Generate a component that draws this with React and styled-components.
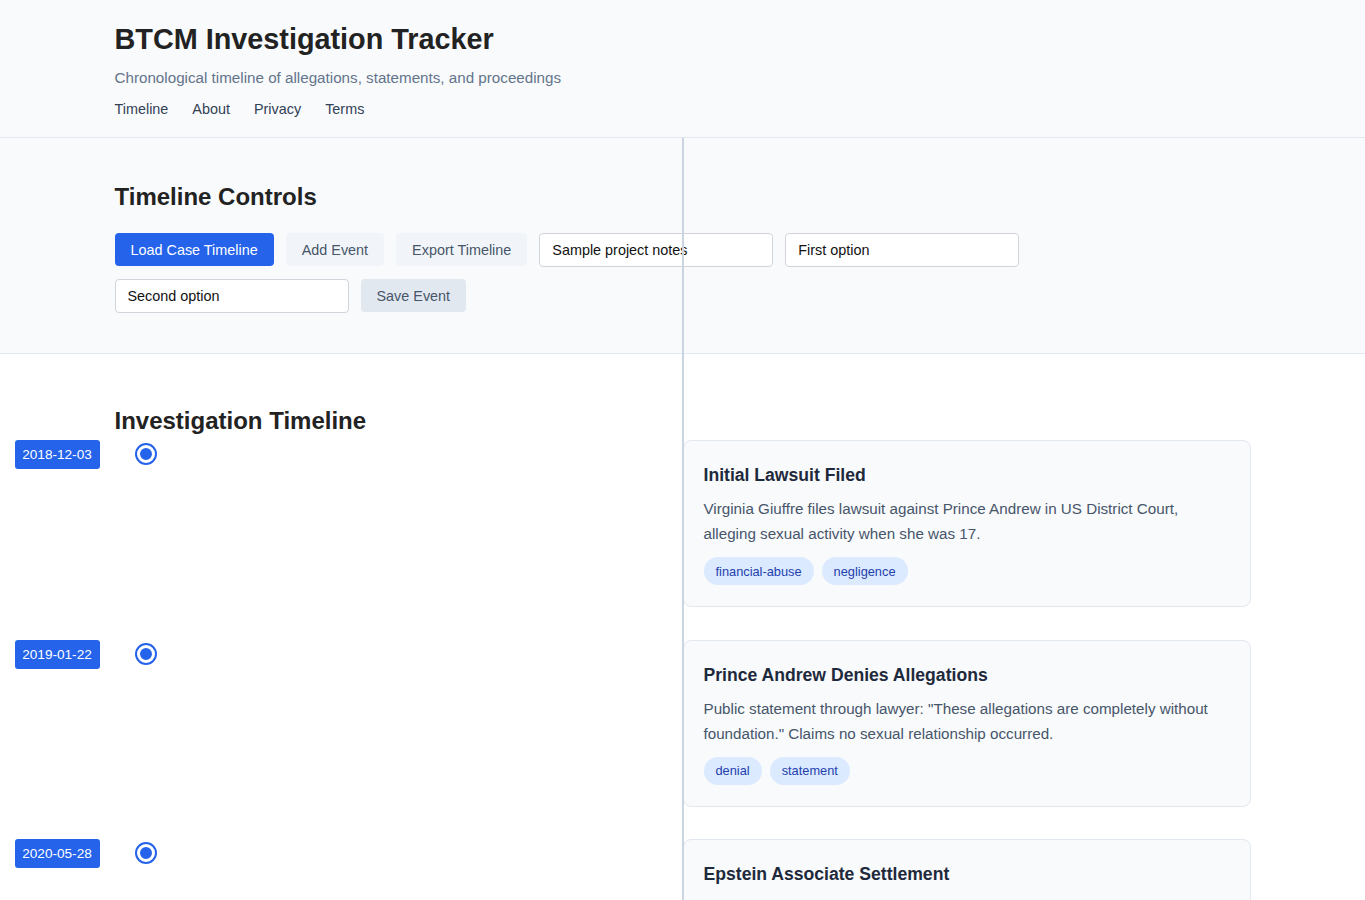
import React from 'react';
import styled, { createGlobalStyle } from 'styled-components';

const GlobalStyle = createGlobalStyle`
  * { box-sizing: border-box; }
  body {
    margin: 0;
    font-family: "Liberation Sans", Arial, sans-serif;
    background: #ffffff;
    color: #1f2937;
  }
`;

const Container = styled.div`
  max-width: 1200px;
  margin: 0 auto;
  padding: 0 32px;
`;

const Header = styled.header`
  background: #f8fafc;
  border-bottom: 1px solid #e2e8f0;
  padding: 23px 0 19px;
`;

const Title = styled.h1`
  margin: 0;
  font-size: 28.8px;
  line-height: 32px;
  font-weight: 700;
  color: #222222;
`;

const Subtitle = styled.p`
  margin: 14px 0 0;
  font-size: 15.2px;
  line-height: 17px;
  color: #64748b;
`;

const Nav = styled.nav`
  display: flex;
  gap: 24px;
  margin-top: 15px;
`;

const NavLink = styled.a`
  font-size: 14.4px;
  line-height: 17px;
  color: #334155;
  text-decoration: none;
`;

const Main = styled.main`
  position: relative;

  &::before {
    content: '';
    position: absolute;
    top: 0;
    bottom: 0;
    left: 50%;
    width: 2px;
    margin-left: -1px;
    background: #cbd5e1;
    z-index: 2;
  }
`;

const Controls = styled.section`
  background: #f8fafc;
  border-bottom: 1px solid #e2e8f0;
  padding: 45px 0 40px;
`;

const SectionTitle = styled.h2`
  margin: 0 0 ${(p) => p.$gap ?? 22}px;
  font-size: 24px;
  line-height: 28px;
  font-weight: 700;
  color: #222222;
`;

const ControlRow = styled.div`
  display: flex;
  flex-wrap: wrap;
  gap: 12px;
`;

const Button = styled.button`
  height: 33px;
  padding: 0 16px;
  border: none;
  border-radius: 4px;
  font-family: inherit;
  font-size: 14.4px;
  cursor: pointer;
  background: ${(p) => (p.$primary ? '#2563eb' : p.$muted ? '#e2e8f0' : '#f1f5f9')};
  color: ${(p) => (p.$primary ? '#ffffff' : '#475569')};
`;

const Input = styled.input`
  width: 234px;
  height: 34px;
  padding: 0 12px;
  border: 1px solid #d1d5db;
  border-radius: 4px;
  background: #ffffff;
  font-family: inherit;
  font-size: 14.4px;
  color: #111111;
`;

const TimelineSection = styled.section`
  padding: 53px 0 40px;
`;

const EventRow = styled.div`
  display: grid;
  grid-template-columns: 1fr 1fr;
  margin-bottom: 32.5px;
`;

const Marker = styled.div`
  display: flex;
  align-items: center;
  align-self: start;
  gap: 35px;
  margin-left: -100px;
  margin-top: -1px;
`;

const DateBadge = styled.span`
  display: inline-flex;
  align-items: center;
  justify-content: center;
  width: 85px;
  height: 29px;
  margin-top: 1px;
  border-radius: 3px;
  background: #2563eb;
  color: #ffffff;
  font-size: 13.6px;
`;

const Dot = styled.span`
  width: 22px;
  height: 22px;
  border-radius: 50%;
  background: #2563eb;
  border: 5px solid #ffffff;
  outline: 2.5px solid #2563eb;
  outline-offset: -2.5px;
`;

const Card = styled.article`
  background: #f8fafc;
  border: 1px solid #e2e8f0;
  border-radius: 8px;
  padding: 23px 20px 20px;
  min-height: 167px;
`;

const CardTitle = styled.h3`
  margin: 0 0 10px;
  font-size: 17.6px;
  line-height: 22px;
  font-weight: 700;
  color: #1e293b;
`;

const CardText = styled.p`
  margin: 0 0 11px;
  font-size: 15.2px;
  line-height: 25px;
  color: #475569;
`;

const Tags = styled.div`
  display: flex;
  gap: 8px;
`;

const Tag = styled.span`
  display: inline-flex;
  align-items: center;
  height: 28px;
  padding: 0 12px;
  border-radius: 999px;
  background: #dbeafe;
  color: #1e40af;
  font-size: 12.8px;
`;

const events = [
  {
    date: '2018-12-03',
    title: 'Initial Lawsuit Filed',
    text: 'Virginia Giuffre files lawsuit against Prince Andrew in US District Court, alleging sexual activity when she was 17.',
    tags: ['financial-abuse', 'negligence'],
  },
  {
    date: '2019-01-22',
    title: 'Prince Andrew Denies Allegations',
    text: 'Public statement through lawyer: "These allegations are completely without foundation." Claims no sexual relationship occurred.',
    tags: ['denial', 'statement'],
  },
  {
    date: '2020-05-28',
    title: 'Epstein Associate Settlement',
    text: 'Settlement reached with an Epstein associate, with terms kept confidential by the court.',
    tags: ['settlement'],
  },
];

const App = () => {
  return (
    <>
      <GlobalStyle />
      <Header>
        <Container>
          <Title>BTCM Investigation Tracker</Title>
          <Subtitle>Chronological timeline of allegations, statements, and proceedings</Subtitle>
          <Nav>
            <NavLink href="#">Timeline</NavLink>
            <NavLink href="#">About</NavLink>
            <NavLink href="#">Privacy</NavLink>
            <NavLink href="#">Terms</NavLink>
          </Nav>
        </Container>
      </Header>
      <Main>
        <Controls>
          <Container>
            <SectionTitle>Timeline Controls</SectionTitle>
            <ControlRow>
              <Button $primary>Load Case Timeline</Button>
              <Button>Add Event</Button>
              <Button>Export Timeline</Button>
              <Input defaultValue="Sample project notes" />
              <Input defaultValue="First option" />
              <Input defaultValue="Second option" />
              <Button $muted>Save Event</Button>
            </ControlRow>
          </Container>
        </Controls>
        <TimelineSection>
          <Container>
            <SectionTitle $gap={5}>Investigation Timeline</SectionTitle>
            {events.map((ev) => (
              <EventRow key={ev.date}>
                <Marker>
                  <DateBadge>{ev.date}</DateBadge>
                  <Dot />
                </Marker>
                <Card>
                  <CardTitle>{ev.title}</CardTitle>
                  <CardText>{ev.text}</CardText>
                  <Tags>
                    {ev.tags.map((t) => (
                      <Tag key={t}>{t}</Tag>
                    ))}
                  </Tags>
                </Card>
              </EventRow>
            ))}
          </Container>
        </TimelineSection>
      </Main>
    </>
  );
};

export default App;
